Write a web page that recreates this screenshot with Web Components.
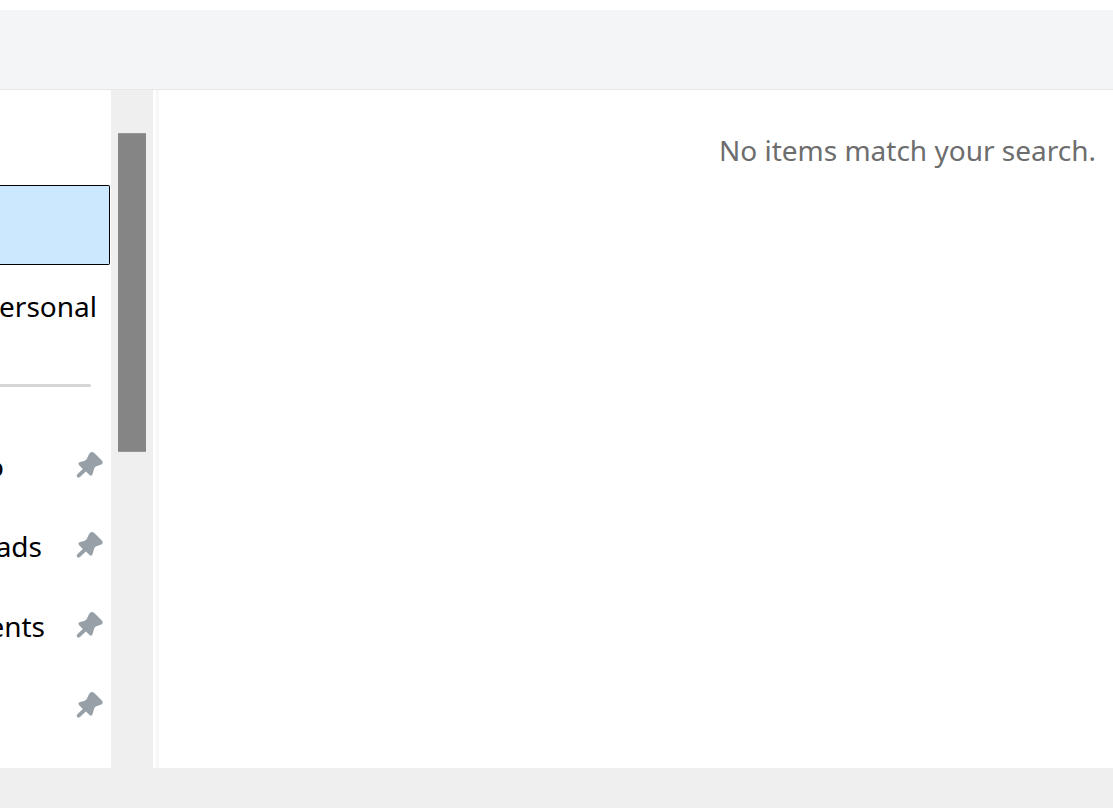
<!DOCTYPE html>
<html lang="en">
<head>
<meta charset="utf-8">
<title>File Explorer</title>
<style>
  body { margin: 0; background: #fff; font: 28px/40px "Noto Sans", "Open Sans", sans-serif; color: #000; }
</style>
</head>
<body>
<explorer-window></explorer-window>

<template id="window-template">
  <style>
    :host { display: flex; flex-direction: column; min-height: 100vh; overflow: hidden; }
    header { height: 79px; margin-top: 10px; background: #f4f5f7; border-bottom: 1px solid #e6e7ea; }
    main { display: flex; flex: 1; min-width: 0; }
    nav { width: 111px; flex: none; padding-top: 95px; box-sizing: border-box; overflow: hidden; }
    hr { margin: 39px 20px 38px 0; border: 0; height: 3px; background: #d6d6d6; border-radius: 0 2px 2px 0; }
    .splitter { width: 3px; margin-left: 3px; background: #f7f7f7; }
    section { flex: 1; padding: 40px 17px 0; text-align: right; color: #6d6d6d; }
    p { margin: 0; }
    footer { height: 40px; background: #efefef; }
  </style>
  <header></header>
  <main>
    <nav aria-label="Navigation pane">
      <nav-item selected></nav-item>
      <nav-item style="--label-end: 97px">ersonal</nav-item>
      <hr>
      <nav-item pinned style="--label-end: 4px">o</nav-item>
      <nav-item pinned style="--label-end: 42px">ads</nav-item>
      <nav-item pinned style="--label-end: 45px">ents</nav-item>
      <nav-item pinned></nav-item>
    </nav>
    <scroll-track></scroll-track>
    <div class="splitter"></div>
    <section><p>No items match your search.</p></section>
  </main>
  <footer></footer>
</template>

<template id="item-template">
  <style>
    :host { display: flex; align-items: center; justify-content: space-between; height: 80px; box-sizing: border-box; }
    :host([selected]) { margin-right: 1px; background: #cce8ff; border: solid #000; border-width: 1px 1px 1px 0; border-radius: 0 2px 2px 0; }
    .label { display: flex; justify-content: flex-end; width: var(--label-end, 0); white-space: nowrap; padding-top: 2px; }
    pin-icon { display: none; margin-right: 7px; }
    :host([pinned]) pin-icon { display: block; }
  </style>
  <span class="label"><slot></slot></span>
  <pin-icon></pin-icon>
</template>

<template id="pin-template">
  <style>
    :host { display: block; width: 28px; height: 28px; flex: none; }
    svg { display: block; fill: #96a0a6; }
  </style>
  <svg width="28" height="28" viewBox="0 0 28 28" aria-hidden="true">
    <path d="M13.1 3Q15 0 17.8 1.6L25.6 9.2Q28 12 25.2 13.6L19.8 15.6Q18.4 16.3 18.1 18L16.4 23.6Q15.2 25.8 13.4 23.8L9.8 20.4L4 26Q2.2 27 1 26Q.2 24.4 1.4 23.2L6.8 18.1L3.2 14.2Q1.6 11.8 3.6 11.2L8.8 9.7Q10.4 9.2 11 7.6Z"/>
  </svg>
</template>

<template id="scroll-template">
  <style>
    :host { display: block; width: 42px; flex: none; box-sizing: border-box; padding: 43px 7px 0; background: #efefef; }
    .thumb { height: 319px; box-sizing: border-box; background: #858585; border: solid #979797; border-width: 1px 0; }
  </style>
  <div class="thumb"></div>
</template>

<script>
  const define = (name, templateId) => customElements.define(name, class extends HTMLElement {
    constructor() {
      super();
      const template = document.getElementById(templateId);
      this.attachShadow({ mode: "open" }).append(template.content.cloneNode(true));
    }
  });
  define("pin-icon", "pin-template");
  define("scroll-track", "scroll-template");
  define("nav-item", "item-template");
  define("explorer-window", "window-template");
</script>
</body>
</html>
